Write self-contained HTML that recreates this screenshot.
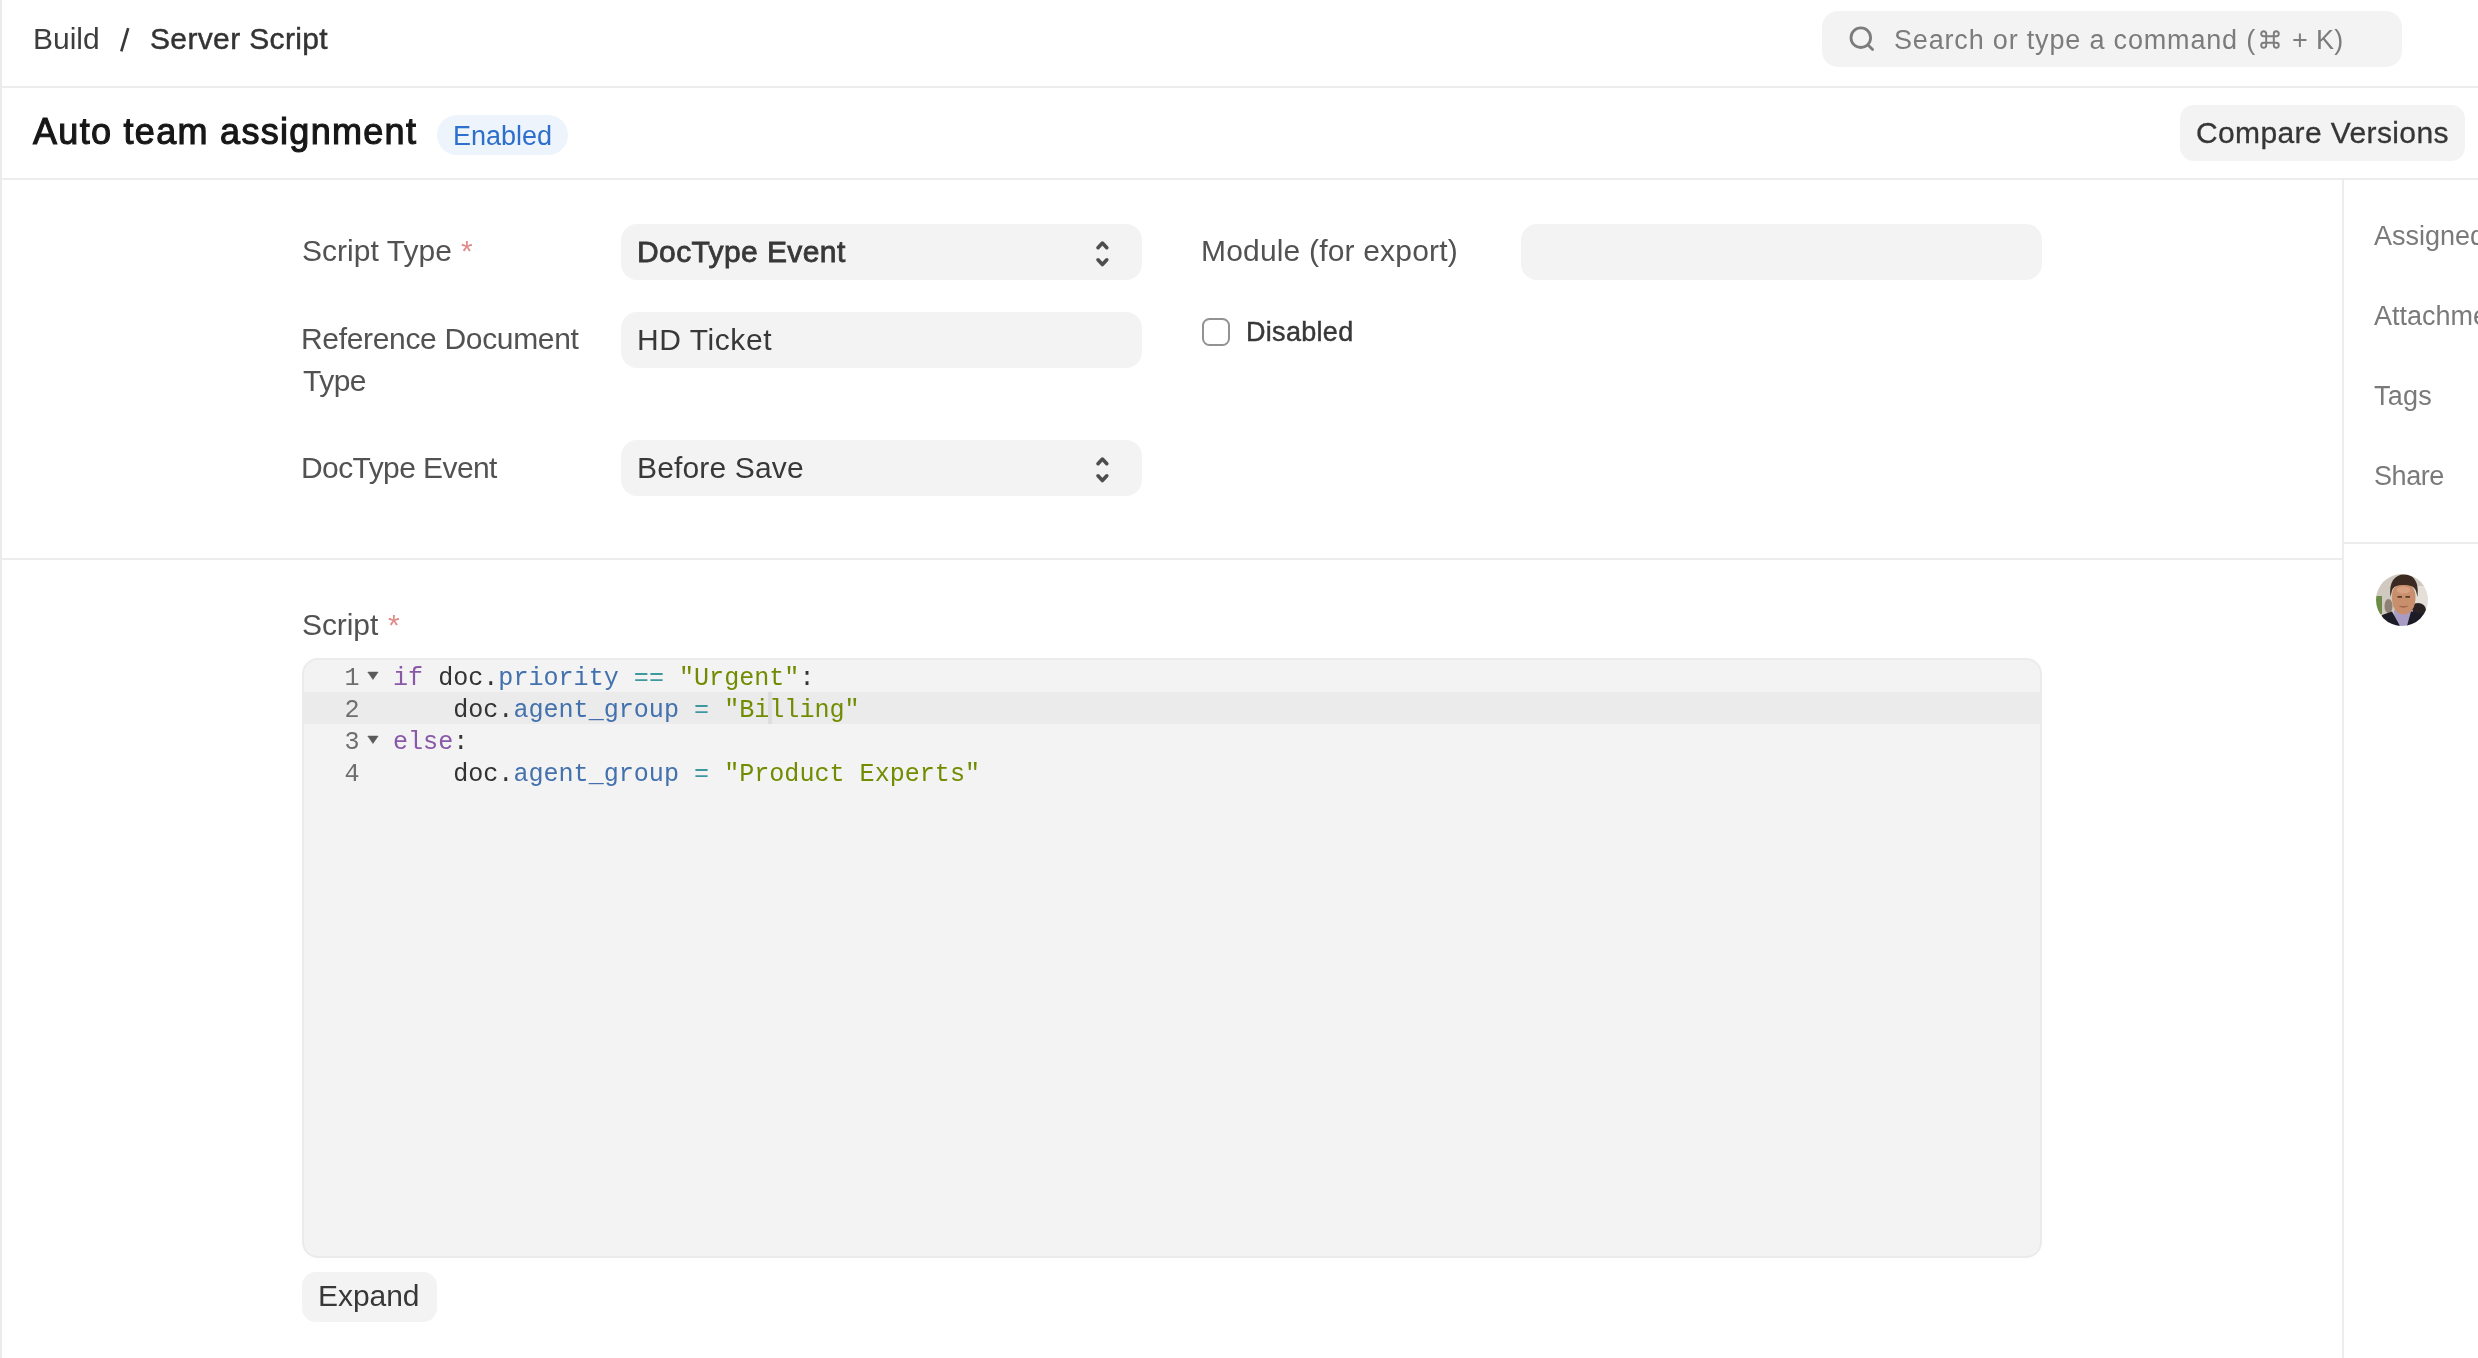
<!DOCTYPE html>
<html>
<head>
<meta charset="utf-8">
<title>Auto team assignment</title>
<style>
html,body{margin:0;padding:0;}
body{width:2478px;height:1358px;overflow:hidden;background:#ffffff;position:relative;font-family:"Liberation Sans",sans-serif;}
.a{position:absolute;}
.ln{position:absolute;background:#ededed;}
.t{position:absolute;white-space:nowrap;line-height:1;will-change:transform;}
.f30{font-size:30px;}
.f27{font-size:27px;}
.lab{color:#525252;}
.val{color:#383838;}
.side{color:#7a7a7a;font-size:27px;}
.box{position:absolute;background:#f3f3f3;border-radius:16px;}
.req{color:#e08d8d;}
.code{position:absolute;will-change:transform;left:393px;top:663px;font-family:"Liberation Mono",monospace;font-size:25.08px;line-height:32px;white-space:pre;color:#333333;}
.gut{position:absolute;will-change:transform;left:300px;top:663px;width:59.5px;text-align:right;font-family:"Liberation Mono",monospace;font-size:25.08px;line-height:32px;white-space:pre;color:#6e6e6e;}
.kw{color:#8959a8;}
.pr{color:#4271ae;}
.op{color:#3e999f;}
.st{color:#718c00;}
@media (max-width:1400px){html{zoom:0.5;}}
</style>
</head>
<body>
<!-- structural lines -->
<div class="ln" style="left:0;top:0;width:2px;height:1358px;background:#ebebeb"></div>
<div class="ln" style="left:2px;top:86px;width:2476px;height:2px"></div>
<div class="ln" style="left:2px;top:178px;width:2476px;height:2px"></div>
<div class="ln" style="left:2342px;top:180px;width:2px;height:1178px"></div>
<div class="ln" style="left:2px;top:558px;width:2340px;height:2px"></div>
<div class="ln" style="left:2344px;top:542px;width:134px;height:2px"></div>

<!-- breadcrumb -->
<div class="t f30" style="left:32.8px;top:24.2px;letter-spacing:0px;color:#3d3d3d">Build</div>
<svg class="a" style="left:116px;top:24px" width="18" height="32" viewBox="0 0 18 32"><line x1="12.2" y1="4.2" x2="5.3" y2="27.3" stroke="#383838" stroke-width="2.7" stroke-linecap="butt"/></svg>
<div class="t f30" style="left:150.2px;top:24.2px;letter-spacing:0.36px;color:#333333;-webkit-text-stroke:0.45px #333333">Server Script</div>

<!-- search -->
<div class="box" style="left:1822px;top:11px;width:580px;height:56px;"></div>
<svg class="a" style="left:1846px;top:24px" width="32" height="30" viewBox="0 0 32 30">
  <circle cx="14.8" cy="13.7" r="9.8" fill="none" stroke="#7c7c7c" stroke-width="2.8"/>
  <line x1="22" y1="21" x2="26.6" y2="25.6" stroke="#7c7c7c" stroke-width="2.8" stroke-linecap="round"/>
</svg>
<div class="t f27" style="left:1894.4px;top:27.1px;letter-spacing:0.824px;color:#7c7c7c">Search or type a command (</div>
<svg class="a" style="left:2260px;top:30px" width="20" height="19" viewBox="0 0 20 19">
  <path d="M6.2 6.2 L6.2 3.7 A2.5 2.5 0 1 0 3.7 6.2 L16.3 6.2 A2.5 2.5 0 1 0 13.8 3.7 L13.8 15.3 A2.5 2.5 0 1 0 16.3 12.8 L3.7 12.8 A2.5 2.5 0 1 0 6.2 15.3 Z" fill="none" stroke="#7c7c7c" stroke-width="1.9"/>
</svg>
<div class="t f27" style="left:2292px;top:27.1px;letter-spacing:0.333px;color:#7c7c7c">+ K)</div>

<!-- title -->
<div class="t" style="left:32.8px;top:114px;font-size:36px;letter-spacing:1.3px;color:#171717;-webkit-text-stroke:1.1px #171717">Auto team assignment</div>
<div class="a" style="left:437px;top:115px;width:131px;height:40px;border-radius:20px;background:#edf4fc"></div>
<div class="t f27" style="left:453px;top:123px;color:#2d6fcc">Enabled</div>

<!-- compare versions -->
<div class="box" style="left:2180px;top:105px;width:285px;height:56px;border-radius:14px"></div>
<div class="t f30" style="left:2196px;top:118.3px;letter-spacing:0.38px;color:#363636;-webkit-text-stroke:0.3px #363636">Compare Versions</div>

<!-- form labels -->
<div class="t f30 lab" style="left:302.2px;top:236px;letter-spacing:0.04px">Script Type</div>
<div class="t f30 req" style="left:460.5px;top:236px">*</div>
<div class="t f30 lab" style="left:300.5px;top:323.9px;letter-spacing:-0.33px">Reference Document</div>
<div class="t f30 lab" style="left:302.5px;top:365.7px;letter-spacing:-0.5px">Type</div>
<div class="t f30 lab" style="left:301.4px;top:452.7px;letter-spacing:-0.583px">DocType Event</div>
<div class="t f30 lab" style="left:1200.8px;top:236.2px;letter-spacing:0.18px">Module (for export)</div>

<!-- inputs -->
<div class="box" style="left:621px;top:224px;width:521px;height:56px;"></div>
<div class="box" style="left:621px;top:312px;width:521px;height:56px;"></div>
<div class="box" style="left:621px;top:440px;width:521px;height:56px;"></div>
<div class="box" style="left:1521px;top:224px;width:521px;height:56px;"></div>
<div class="t f30 val" style="left:636.6px;top:237.4px;letter-spacing:0.4px;-webkit-text-stroke:0.8px #383838">DocType Event</div>
<div class="t f30 val" style="left:636.6px;top:325px;letter-spacing:0.562px">HD Ticket</div>
<div class="t f30 val" style="left:636.6px;top:453.1px;letter-spacing:0.16px">Before Save</div>
<svg class="a" style="left:1092px;top:238px" width="22" height="32" viewBox="0 0 22 32">
  <polyline points="6,9.7 10.4,5.1 14.8,9.7" fill="none" stroke="#4e4e4e" stroke-width="3.6" stroke-linecap="round" stroke-linejoin="round"/>
  <polyline points="6,21.8 10.4,26.5 14.8,21.8" fill="none" stroke="#4e4e4e" stroke-width="3.6" stroke-linecap="round" stroke-linejoin="round"/>
</svg>
<svg class="a" style="left:1092px;top:454px" width="22" height="32" viewBox="0 0 22 32">
  <polyline points="6,9.7 10.4,5.1 14.8,9.7" fill="none" stroke="#4e4e4e" stroke-width="3.6" stroke-linecap="round" stroke-linejoin="round"/>
  <polyline points="6,21.8 10.4,26.5 14.8,21.8" fill="none" stroke="#4e4e4e" stroke-width="3.6" stroke-linecap="round" stroke-linejoin="round"/>
</svg>

<!-- checkbox -->
<div class="a" style="left:1202px;top:318px;width:24px;height:24px;border:2px solid #929292;border-radius:7.5px;"></div>
<div class="t f27 val" style="left:1246.1px;top:318.8px;letter-spacing:0.3px;-webkit-text-stroke:0.45px #383838">Disabled</div>

<!-- sidebar -->
<div class="t side" style="left:2374.1px;top:222.9px">Assigned To</div>
<div class="t side" style="left:2374.1px;top:302.8px">Attachments</div>
<div class="t side" style="left:2374.1px;top:382.9px;letter-spacing:0.233px">Tags</div>
<div class="t side" style="left:2374.1px;top:462.8px;letter-spacing:-0.425px">Share</div>
<svg class="a" style="left:2376px;top:574px" width="52" height="52" viewBox="0 0 52 52">
  <defs><clipPath id="av"><circle cx="26" cy="26" r="26"/></clipPath><filter id="bl" x="-5%" y="-5%" width="110%" height="110%"><feGaussianBlur stdDeviation="0.7"/></filter></defs>
  <g clip-path="url(#av)"><g filter="url(#bl)">
    <rect width="52" height="52" fill="#cfc9bf"/>
    <rect x="36" y="12" width="16" height="26" fill="#e4e0d8"/>
    <rect x="0" y="22" width="6" height="18" fill="#6d8a46"/>
    <ellipse cx="12.5" cy="32" rx="4" ry="7" fill="#8f8074"/>
    <ellipse cx="42" cy="36" rx="8" ry="7" fill="#2c2420"/>
    <path d="M18 36 L37 36 L35 52 L19 52 Z" fill="#a99cc4"/>
    <path d="M2 52 L6 41 L16 37.5 L24 52 Z" fill="#1d1b25"/>
    <path d="M35 37.5 L47 40 L52 52 L31 52 Z" fill="#1d1b25"/>
    <path d="M16 22 C15.5 34 21 40.5 27.6 40.5 C34.5 40.5 40 34 39.5 22 C39.5 14 34 9 27.6 9 C21 9 16 14 16 22 Z" fill="#c98f6d"/>
    <ellipse cx="27.5" cy="16" rx="7" ry="3.5" fill="#d8a181"/>
    <path d="M14.5 23 C12.5 8 19 0.6 28 0.6 C37 0.6 43.5 7 41.5 23 L40 17 C38.5 12.5 34 11 27.5 11 C21 11 17 12.5 15.8 17 Z" fill="#3a2b20"/>
    <path d="M21.5 22.8 h4.5 M29.5 22.8 h4.5" stroke="#5a3c2c" stroke-width="1.8"/>
    <path d="M23.5 32 q4 2 8 0" stroke="#9a6048" stroke-width="1.3" fill="none"/>
  </g></g>
</svg>

<!-- script -->
<div class="t f30 lab" style="left:302.2px;top:609.6px;letter-spacing:-0.08px">Script</div>
<div class="t f30 req" style="left:388px;top:609.6px">*</div>
<div class="a" style="left:302px;top:658px;width:1736px;height:596px;background:#f3f3f3;border:2px solid #ebebeb;border-radius:16px;overflow:hidden">
  <div class="a" style="left:0;top:32px;width:1736px;height:32px;background:#ebebeb"></div>
</div>
<div class="a" style="left:768px;top:692px;width:4px;height:32px;background:#dedede"></div>
<div class="gut">1
2
3
4</div>
<svg class="a" style="left:367px;top:671px" width="13" height="9" viewBox="0 0 13 9"><path d="M0.8 1.1 L11.1 1.1 L5.95 8.5 Z" fill="#5a5a5a" stroke="#5a5a5a" stroke-width="0.6" stroke-linejoin="round"/></svg>
<svg class="a" style="left:367px;top:735px" width="13" height="9" viewBox="0 0 13 9"><path d="M0.8 1.1 L11.1 1.1 L5.95 8.5 Z" fill="#5a5a5a" stroke="#5a5a5a" stroke-width="0.6" stroke-linejoin="round"/></svg>
<div class="code"><span class="kw">if</span> doc.<span class="pr">priority</span> <span class="op">==</span> <span class="st">"Urgent"</span>:
    doc.<span class="pr">agent_group</span> <span class="op">=</span> <span class="st">"Billing"</span>
<span class="kw">else</span>:
    doc.<span class="pr">agent_group</span> <span class="op">=</span> <span class="st">"Product Experts"</span></div>

<!-- expand -->
<div class="box" style="left:302px;top:1272px;width:135px;height:50px;border-radius:14px"></div>
<div class="t f30 val" style="left:318.1px;top:1280.9px;letter-spacing:-0.04px">Expand</div>
</body>
</html>
